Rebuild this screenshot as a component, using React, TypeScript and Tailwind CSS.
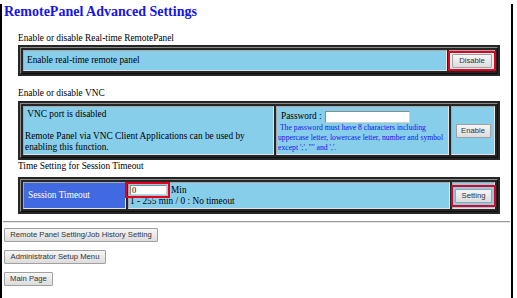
import type { ReactNode } from "react";

const cell = "border border-[#e4e4e4] border-t-[#a8a8a8] border-l-[#a8a8a8]";

function Btn({ children, className = "" }: { children: ReactNode; className?: string }) {
  return (
    <button
      className={`flex h-[14px] items-center justify-center rounded-[1px] border border-[#a0a0a0] bg-linear-to-b from-[#f6f6f6] to-[#dcdcdc] font-['Liberation_Sans',Arial,sans-serif] text-[7.7px] leading-none text-[#333] ${className}`}
    >
      {children}
    </button>
  );
}

function Marked({ children, className = "" }: { children: ReactNode; className?: string }) {
  return (
    <div className="relative">
      {children}
      <span className={`pointer-events-none absolute border-2 border-[#e5001c] ${className}`}></span>
    </div>
  );
}

function Frame({ children, className = "" }: { children: ReactNode; className?: string }) {
  return (
    <div className={`ml-[16px] w-[482px] bg-[#262626] p-[2px] ${className}`}>
      <div className="flex gap-[2px] border border-t-[#8c8c8c] border-l-[#8c8c8c] border-b-[#0d0d0d] border-r-[#0d0d0d] p-[2px]">
        {children}
      </div>
    </div>
  );
}

export default function App() {
  return (
    <div className="h-[298px] w-[517px] bg-white">
      <div className="h-[298px] w-[513px] border-x-2 border-b-2 border-black font-['Liberation_Serif',serif] text-[9.33px] leading-[11px] text-black">
        <h1 className="ml-[2px] mt-[4px] text-[14px] font-bold leading-[16px] text-[#1414f0]">
          RemotePanel Advanced Settings
        </h1>

        <div className="ml-[16px] mt-[13px]">Enable or disable Real-time RemotePanel</div>
        <Frame className="mt-[1px]">
          <div className={`${cell} flex h-[21px] w-[424px] items-center bg-[#87ceeb] pl-[3px]`}>
            Enable real-time remote panel
          </div>
          <div className={`${cell} flex h-[21px] w-[46px] items-center justify-center bg-[#f2f2f2]`}>
            <Marked className="-left-[4px] -right-[4px] -top-[3px] -bottom-[3px]">
              <Btn className="w-[40px]">Disable</Btn>
            </Marked>
          </div>
        </Frame>

        <div className="ml-[16px] mt-[12px]">Enable or disable VNC</div>
        <Frame className="mt-[2px]">
          <div className={`${cell} flex h-[49px] w-[251px] flex-col justify-center bg-[#87ceeb] pl-[1px]`}>
            <div>&nbsp;VNC port is disabled</div>
            <div>&nbsp;</div>
            <div className="whitespace-nowrap">Remote Panel via VNC Client Applications can be used by</div>
            <div>enabling this function.</div>
          </div>
          <div className={`${cell} flex h-[49px] w-[173px] flex-col bg-[#87ceeb] pl-[1px] pt-[3px]`}>
            <div className="flex h-[13px] items-center pl-[3px]">
              <span>Password :</span>
              <span className="ml-[3px] h-[12px] w-[85px] border border-[#8a8a8a] border-b-[#d0d0d0] border-r-[#d0d0d0] bg-white"></span>
            </div>
            <div className="whitespace-nowrap text-[7.7px] leading-[10px] text-[#1414f0]">
              <div>&nbsp;The password must have 8 characters including</div>
              <div>uppercase letter, lowercase letter, number and symbol</div>
              <div>except ';', '"' and ','.</div>
            </div>
          </div>
          <div className={`${cell} flex h-[49px] w-[44px] items-center justify-center bg-[#87ceeb]`}>
            <Btn className="w-[35px]">Enable</Btn>
          </div>
        </Frame>

        <div className="ml-[16px] mt-[1px]">Time Setting for Session Timeout</div>
        <Frame className="mt-[5px]">
          <div className={`${cell} flex h-[27px] w-[103px] items-center bg-[#4169e1] pl-[4px] text-white`}>
            Session Timeout
          </div>
          <div className={`${cell} flex h-[27px] w-[322px] flex-col justify-center bg-[#87ceeb]`}>
            <div className="flex h-[12px] items-center">
              <Marked className="-left-[4px] -right-[3px] -top-[3px] -bottom-[3px] z-10">
                <div className="ml-[1px] flex h-[10px] w-[37px] items-center border border-[#8a8a8a] border-b-[#d0d0d0] border-r-[#d0d0d0] bg-white pl-[1px] text-[8.5px]">
                  0
                </div>
              </Marked>
              <span className="ml-[4px]">Min</span>
            </div>
            <div className="pl-[1px]">1 - 255 min / 0 : No timeout</div>
          </div>
          <div className={`${cell} flex h-[27px] w-[43px] items-center justify-center bg-[#87ceeb]`}>
            <Marked className="-inset-[4px]">
              <Btn className="h-[13px] w-[37px]">Setting</Btn>
            </Marked>
          </div>
        </Frame>

        <div className="mx-[1px] mt-[7px] h-[2px] border-t border-b border-t-[#9a9a9a] border-b-[#e6e6e6]"></div>

        <Btn className="ml-[2px] mt-[5px] w-[154px]">Remote Panel Setting/Job History Setting</Btn>
        <Btn className="ml-[2px] mt-[8px] w-[102px]">Administrator Setup Menu</Btn>
        <Btn className="ml-[2px] mt-[8px] w-[49px]">Main Page</Btn>
      </div>
    </div>
  );
}
